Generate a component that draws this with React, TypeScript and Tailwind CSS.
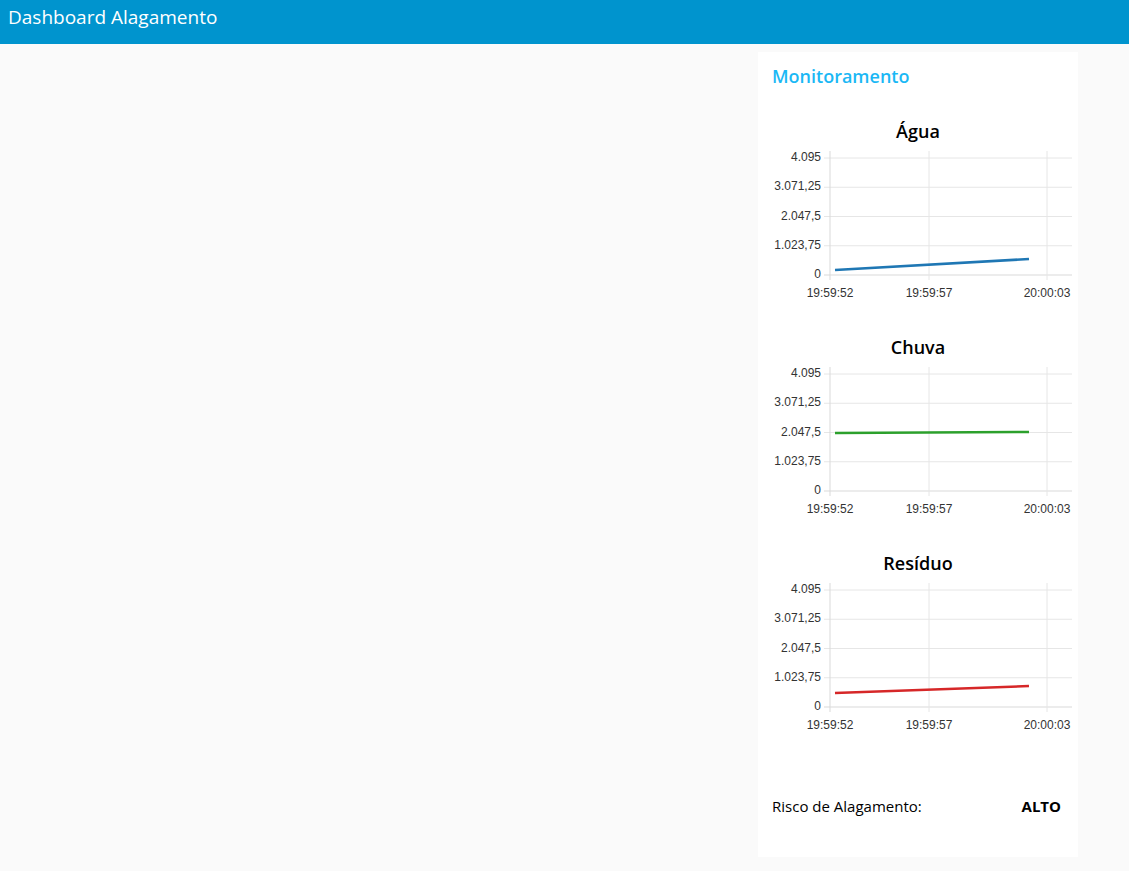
import React from "react";

type Series = {
  title: string;
  color: string;
  from: number;
  to: number;
};

const CHARTS: Series[] = [
  { title: "Água", color: "#1f77b4", from: 127, to: 116 },
  { title: "Chuva", color: "#2ca02c", from: 74, to: 73 },
  { title: "Resíduo", color: "#d62728", from: 118, to: 111 },
];

const Y_TICKS = ["4.095", "3.071,25", "2.047,5", "1.023,75", "0"];
const X_TICKS = [
  { x: 72, label: "19:59:52" },
  { x: 171, label: "19:59:57" },
  { x: 289, label: "20:00:03" },
];

function LineChart({ series }: { series: Series }) {
  const top = 15;
  const bottom = 132;
  const step = (bottom - top) / 4;

  return (
    <div className="h-[216px]">
      <div className="h-6 text-center text-[18px] leading-6 font-semibold text-black">{series.title}</div>
      <svg width={320} height={192} className="block" style={{ fontFamily: '"Liberation Sans", Arial, sans-serif' }}>
        {Y_TICKS.map((label, i) => {
          const y = top + i * step;
          return (
            <g key={label}>
              <line x1={66} x2={314} y1={y} y2={y} stroke={i === 4 ? "#d9d9d9" : "#e6e6e6"} strokeWidth={1} />
              <text x={63} y={y} textAnchor="end" dominantBaseline="middle" fontSize={12} fill="#333">
                {label}
              </text>
            </g>
          );
        })}
        {X_TICKS.map((t, i) => (
          <g key={t.label}>
            <line x1={t.x} x2={t.x} y1={8} y2={bottom + 5} stroke={i === 0 ? "#d9d9d9" : "#e6e6e6"} strokeWidth={1} />
            <text x={t.x} y={bottom + 19} textAnchor="middle" dominantBaseline="middle" fontSize={12} fill="#333">
              {t.label}
            </text>
          </g>
        ))}
        <line x1={77} y1={series.from} x2={271} y2={series.to} stroke={series.color} strokeWidth={2.5} strokeLinecap="butt" />
      </svg>
    </div>
  );
}

export default function App() {
  return (
    <div className="min-h-[871px] bg-[#fafafa]" style={{ fontFamily: '"Open Sans", "Noto Sans", sans-serif' }}>
      <header className="flex h-[44px] items-start bg-[#0094ce] px-2 pt-[3px]">
        <h1 className="text-[19px] leading-7 text-white">Dashboard Alagamento</h1>
      </header>

      <div className="flex justify-end pr-[51px] pt-[8px]">
        <div className="w-[320px] bg-white pb-[39px] pt-[12px]">
          <h2 className="h-6 px-[14px] text-[18px] leading-6 font-semibold text-[#1bb8f5]">Monitoramento</h2>
          <div className="mt-[31px]">
            {CHARTS.map((c) => (
              <LineChart key={c.title} series={c} />
            ))}
          </div>
          <div className="mt-[27px] flex h-6 items-center justify-between pl-[14px] pr-[17px] text-[15px] text-black">
            <span>Risco de Alagamento:</span>
            <span className="font-bold">ALTO</span>
          </div>
        </div>
      </div>
    </div>
  );
}
